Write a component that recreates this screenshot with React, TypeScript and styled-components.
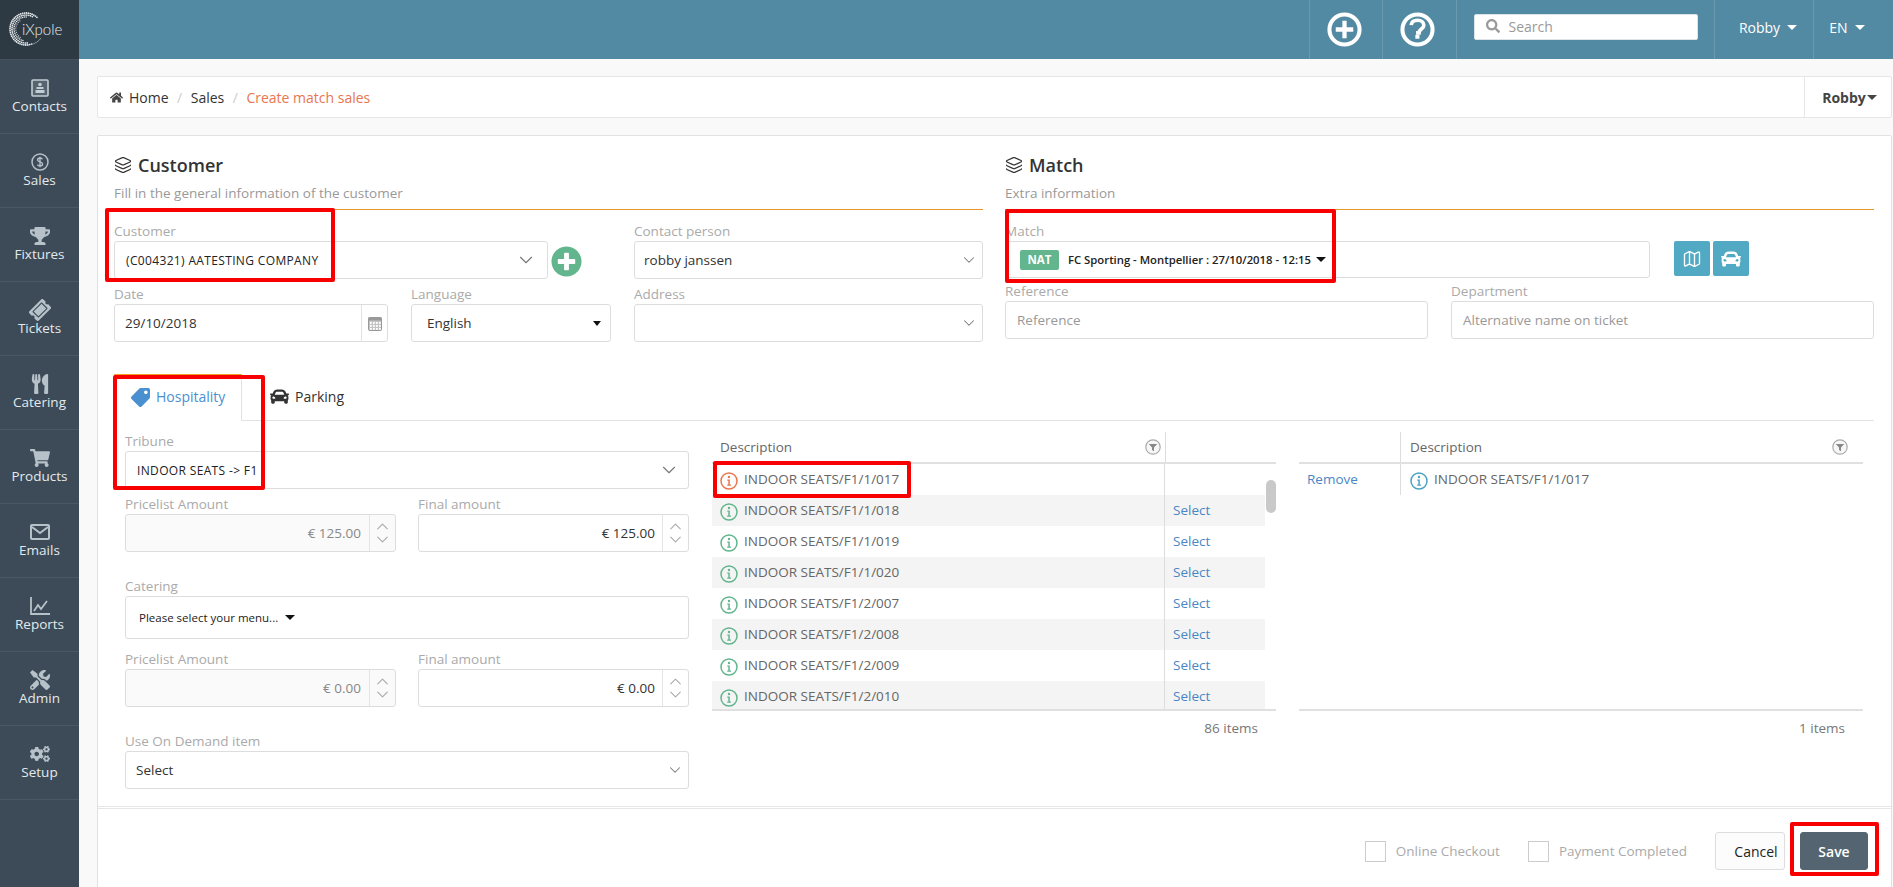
import React from "react";
import styled, { createGlobalStyle } from "styled-components";
import { ChevronDown, ChevronUp, Layers, Map as MapIcon } from "lucide-react";
import {
  FaCar,
  FaCogs,
  FaHome,
  FaPlusCircle,
  FaSearch,
  FaShoppingCart,
  FaTag,
  FaTicketAlt,
  FaTools,
  FaTrophy,
  FaUtensils
} from "react-icons/fa";

const GlobalStyle = createGlobalStyle`
  html, body {
    margin: 0;
    padding: 0;
    height: 100%;
    overflow: hidden;
    font-family: "Open Sans", "Liberation Sans", sans-serif;
    font-size: 13.5px;
    color: #333;
    background: #f9f9f9;
  }
  * { box-sizing: border-box; }
`;

const Page = styled.div`
  position: relative;
  display: grid;
  grid-template-columns: 79px 1fr;
  width: 1893px;
  height: 887px;
  overflow: hidden;
`;

const Sidebar = styled.aside`
  background: #3c4b57;
  display: flex;
  flex-direction: column;
`;
const LogoBox = styled.div`
  height: 60px;
  background: #2d3a44;
  border-bottom: 1px solid #44525e;
`;
const NavItem = styled.div`
  height: 74px;
  padding-top: 19px;
  display: flex;
  flex-direction: column;
  align-items: center;
  color: #e4e9ed;
  border-bottom: 1px solid #4a5864;
  line-height: 18px;
`;
const NavIcon = styled.div`
  height: 18px;
  display: flex;
  align-items: center;
  justify-content: center;
  color: #b7c1c9;
  font-size: 20px;
`;

const Main = styled.div`
  display: flex;
  flex-direction: column;
  min-width: 0;
`;
const Topbar = styled.header`
  height: 59px;
  flex: none;
  background: #538aa3;
  display: flex;
  justify-content: flex-end;
  padding-right: 13px;
  color: #fff;
  font-size: 14px;
`;
const TopCell = styled.div<{ $w: number; $shift?: number }>`
  width: ${p => p.$w}px;
  border-left: 1px solid #6a9ab0;
  display: flex;
  align-items: center;
  justify-content: center;
  gap: 7px;
  padding-bottom: 4px;
  padding-left: ${p => Math.max(p.$shift || 0, 0)}px;
  padding-right: ${p => Math.max(-(p.$shift || 0), 0)}px;
`;
const IconCell = styled(TopCell)`
  padding-bottom: 0;
`;
const SearchCell = styled(TopCell)`
  align-items: flex-start;
  padding-top: 14px;
  padding-bottom: 0;
`;
const SearchBox = styled.div`
  width: 224px;
  height: 26px;
  background: #fff;
  border-radius: 2px;
  border: 1px solid #dde3e6;
  display: flex;
  align-items: center;
  gap: 9px;
  padding: 0 0 2px 11px;
  color: #999;
`;
const Caret = styled.span<{ $color?: string; $size?: number }>`
  display: inline-block;
  width: 0;
  height: 0;
  border-left: ${p => p.$size ?? 5}px solid transparent;
  border-right: ${p => p.$size ?? 5}px solid transparent;
  border-top: 5px solid ${p => p.$color || "#fff"};
`;

const Content = styled.div`
  flex: 1;
  padding: 17px 1px 0 18px;
  min-height: 0;
`;
const Crumbs = styled.nav`
  height: 42px;
  background: #fff;
  border: 1px solid #e6e6e6;
  border-radius: 2px;
  display: flex;
  align-items: center;
  padding-left: 12px;
  margin-bottom: 17px;
  color: #333;
  font-size: 14px;
`;
const Crumb = styled.span<{ $active?: boolean }>`
  color: ${p => (p.$active ? "#e8764f" : "#333")};
`;
const CrumbSep = styled.span`
  color: #ccc;
  margin: 0 8.5px;
`;
const CrumbUser = styled.div`
  margin-left: auto;
  width: 87px;
  height: 100%;
  border-left: 1px solid #e6e6e6;
  display: flex;
  align-items: center;
  justify-content: center;
  gap: 1px;
  padding-left: 3px;
  font-weight: 700;
  color: #444;
`;

const Card = styled.section`
  background: #fff;
  border: 1px solid #e2e2e2;
  border-radius: 2px;
  height: 760px;
  display: flex;
  flex-direction: column;
`;
const Form = styled.div`
  padding: 17px 17px 0 16px;
`;
const Columns = styled.div`
  display: grid;
  grid-template-columns: 869px 869px;
  gap: 22px;
`;
const SectionTitle = styled.h2`
  margin: 0;
  height: 24px;
  font-size: 18px;
  font-weight: 600;
  line-height: 24px;
  color: #333;
  display: flex;
  align-items: center;
  gap: 6px;
`;
const SectionHint = styled.div`
  margin-top: 6px;
  line-height: 20px;
  color: #999;
  padding-bottom: 6px;
  border-bottom: 1px solid #e6992a;
  margin-bottom: 11px;
`;
const LeftRows = styled.div`
  display: grid;
  grid-template-columns: 497px 349px;
  column-gap: 23px;
  row-gap: 5px;
`;
const Pair = styled.div`
  display: flex;
  gap: 23px;
`;
const CustomerPick = styled.div`
  display: flex;
  align-items: flex-end;
  gap: 3px;
`;
const AddCircle = styled.div`
  color: #62b58c;
  font-size: 31px;
  height: 36px;
  display: flex;
  align-items: center;
`;
const Group = styled.div<{ $w?: number; $after?: number }>`
  ${p => (p.$w ? `width: ${p.$w}px; flex: none;` : "flex: 1; min-width: 0;")}
  margin-bottom: ${p => p.$after || 0}px;
`;
const Label = styled.div`
  height: 20px;
  line-height: 20px;
  color: #aaa;
`;
const Field = styled.div<{ $h?: number; $pad?: number; $disabled?: boolean }>`
  height: ${p => p.$h || 38}px;
  border: 1px solid #ddd;
  border-radius: 3px;
  background: ${p => (p.$disabled ? "#fafafa" : "#fff")};
  display: flex;
  align-items: center;
  padding-left: ${p => p.$pad ?? 12}px;
  color: #333;
`;
const PickText = styled.span`
  font-size: 12px;
  letter-spacing: 0.35px;
  color: #222;
`;
const MenuText = styled.span`
  font-size: 11.5px;
  font-weight: 500;
  color: #222;
`;
const Chevron = styled(ChevronDown)<{ $right?: number }>`
  margin-left: auto;
  margin-right: ${p => p.$right ?? 10}px;
  color: #777;
  flex: none;
`;
const LangCaret = styled(Caret)`
  margin-left: auto;
  margin-right: 9px;
`;
const MenuCaret = styled(Caret)`
  margin-left: 7px;
`;
const DateAddon = styled.div`
  margin-left: auto;
  width: 26px;
  height: 100%;
  border-left: 1px solid #e2e2e2;
  display: flex;
  align-items: center;
  justify-content: center;
  color: #999;
  padding-left: 1px;
`;
const Placeholder = styled.span`
  color: #999;
`;
const MatchRow = styled.div`
  display: flex;
  align-items: flex-end;
`;
const MatchTools = styled.div`
  display: flex;
  gap: 3px;
  margin-left: 24px;
  margin-bottom: 2px;
`;
const ToolButton = styled.div`
  width: 36px;
  height: 35px;
  background: #52a9c3;
  border-radius: 2px;
  color: #fff;
  display: flex;
  align-items: center;
  justify-content: center;
`;
const Badge = styled.span`
  width: 39px;
  height: 20px;
  background: #62b58c;
  border-radius: 2px;
  color: #fff;
  font-size: 11.5px;
  font-weight: 700;
  display: flex;
  align-items: center;
  justify-content: center;
  margin-right: 9px;
`;
const MatchText = styled.span`
  font-size: 11.3px;
  font-weight: 600;
  color: #222;
  margin-right: 5px;
`;
const RefRow = styled.div`
  display: flex;
  gap: 23px;
  margin-top: 3px;
`;

const Tabs = styled.div`
  margin-top: 33px;
  height: 46px;
  display: flex;
  border-bottom: 1px solid #e2e2e2;
  font-size: 14px;
`;
const Tab = styled.div<{ $active?: boolean }>`
  display: flex;
  align-items: flex-start;
  gap: 6px;
  line-height: 19px;
  ${p =>
    p.$active
      ? `width: 128px; height: 47px; margin-top: -1px; background: #fff; color: #4a90d0; font-weight: 500; border-top: 2px solid #f0a020; border-left: 1px solid #e2e2e2; border-right: 1px solid #e2e2e2; padding: 11px 0 0 16px;`
      : `height: 46px; color: #333; font-weight: 400; padding: 12px 0 0 28px;`}
`;
const TagIcon = styled(FaTag)`
  transform: scaleX(-1);
  margin-top: 1px;
`;
const TabBody = styled.div`
  display: grid;
  grid-template-columns: 564px 564px 564px;
  gap: 23px;
  padding: 10px 0 0 11px;
`;
const TwoUp = styled.div`
  display: flex;
  gap: 22px;
`;
const NumberText = styled.span<{ $muted?: boolean }>`
  margin-left: auto;
  margin-right: ${p => (p.$muted ? 8 : 7)}px;
  color: ${p => (p.$muted ? "#888" : "#333")};
`;
const Spinner = styled.div`
  width: 26px;
  height: 100%;
  border-left: 1px solid #e4e4e4;
  display: flex;
  flex-direction: column;
  align-items: center;
  justify-content: center;
  color: #aaa;
  flex: none;
`;
const SpinUp = styled(ChevronUp)`
  margin-bottom: -3px;
`;
const SpinDown = styled(ChevronDown)`
  margin-top: -3px;
`;

const TableWrap = styled.div`
  position: relative;
  padding-top: 1px;
`;
const HeadRow = styled.div`
  display: flex;
  height: 32px;
  border-bottom: 2px solid #e0e0e0;
  color: #666;
`;
const Cell = styled.div<{ $w?: number; $line?: boolean; $pad?: number }>`
  ${p => (p.$w ? `width: ${p.$w}px; flex: none;` : "flex: 1; min-width: 0;")}
  ${p => (p.$line ? "border-left: 1px solid #ddd;" : "")}
  padding-left: ${p => p.$pad ?? 8}px;
  display: flex;
  align-items: center;
  gap: 6px;
  height: 100%;
`;
const RowCell = styled(Cell)`
  padding-bottom: 2px;
`;
const FilterSpot = styled.span<{ $right?: number }>`
  margin-left: auto;
  margin-right: ${p => p.$right ?? 4}px;
  display: flex;
`;
const TableBody = styled.div`
  height: 247px;
  overflow: hidden;
  border-bottom: 2px solid #e0e0e0;
`;
const Row = styled.div<{ $striped?: boolean; $w?: number }>`
  display: flex;
  height: 31px;
  ${p => (p.$w ? `width: ${p.$w}px;` : "")}
  background: ${p => (p.$striped ? "#f4f4f4" : "#fff")};
  color: #666;
`;
const LinkText = styled.span`
  color: #4a86c5;
`;
const Thumb = styled.div`
  position: absolute;
  right: 0;
  top: 49px;
  width: 10px;
  height: 33px;
  background: #c9c9c9;
  border-radius: 5px;
`;
const Count = styled.div`
  height: 34px;
  line-height: 34px;
  text-align: right;
  padding-right: 18px;
  color: #777;
`;
const InfoSvg = styled.svg`
  margin-top: 5px;
  flex: none;
`;

const Divider = styled.div`
  margin-top: auto;
  height: 3px;
  border-top: 1px solid #e6e6e6;
  border-bottom: 1px solid #e6e6e6;
`;
const Footer = styled.footer`
  display: flex;
  align-items: flex-start;
  justify-content: flex-end;
  padding: 23px 23px 0 0;
  height: 85px;
`;
const Check = styled.label`
  display: flex;
  align-items: center;
  height: 38px;
  gap: 10px;
  color: #aaa;
  margin-right: 28px;
`;
const CheckBox = styled.span`
  width: 21px;
  height: 21px;
  border: 1px solid #ccc;
  background: #fff;
`;
const Button = styled.button<{ $primary?: boolean }>`
  height: 38px;
  border-radius: 3px;
  font: inherit;
  font-size: 14px;
  font-weight: ${p => (p.$primary ? 600 : 400)};
  color: ${p => (p.$primary ? "#fff" : "#222")};
  background: ${p => (p.$primary ? "#546571" : "#fcfcfc")};
  border: 1px solid ${p => (p.$primary ? "#546571" : "#ddd")};
  width: ${p => (p.$primary ? 68 : 70)}px;
  margin-left: ${p => (p.$primary ? 15 : 0)}px;
  padding: 0 0 0 ${p => (p.$primary ? 0 : 12)}px;
`;

const Annotation = styled.div<{ $x: number; $y: number; $w: number; $h: number }>`
  position: absolute;
  left: ${p => p.$x}px;
  top: ${p => p.$y}px;
  width: ${p => p.$w}px;
  height: ${p => p.$h}px;
  border: 4px solid #f80000;
  border-radius: 2px;
  pointer-events: none;
`;

function Logo() {
  const dots: React.ReactNode[] = [];
  const rings = [
    { r: 16, from: 70, to: 320, count: 36, size: 0.9 },
    { r: 14, from: 85, to: 305, count: 28, size: 0.85 },
    { r: 12, from: 105, to: 280, count: 20, size: 0.75 },
    { r: 10.2, from: 125, to: 245, count: 10, size: 0.6 }
  ];
  rings.forEach((ring, j) => {
    for (let i = 0; i < ring.count; i++) {
      const rad = ((ring.from + (i * (ring.to - ring.from)) / ring.count) * Math.PI) / 180;
      dots.push(
        <circle
          key={`${j}-${i}`}
          cx={26 + ring.r * Math.cos(rad)}
          cy={29 + ring.r * Math.sin(rad)}
          r={ring.size}
          fill="#e6eaed"
        />
      );
    }
  });
  return (
    <svg width="79" height="59" viewBox="0 0 79 59">
      {dots}
      <path d="M31 44.5 A16 16 0 0 0 41 38" fill="none" stroke="#aeb8bf" strokeWidth="0.7" />
      <text x="22" y="35" fontFamily="Lato, 'Open Sans', sans-serif" fontWeight="300" fontSize="15" fill="#e6eaed">
        iXpole
      </text>
    </svg>
  );
}

function ContactsIcon() {
  return (
    <svg width="18" height="18" viewBox="0 0 18 18">
      <rect x="1" y="1" width="16" height="16" rx="1" fill="#56646f" stroke="#c2ccd3" strokeWidth="1.6" />
      <circle cx="9" cy="5.5" r="1.8" fill="#c2ccd3" />
      <rect x="5.5" y="8" width="7" height="2" fill="#c2ccd3" />
      <rect x="4.5" y="11" width="9" height="3" fill="#c2ccd3" />
    </svg>
  );
}

function SalesIcon() {
  return (
    <svg width="18" height="18" viewBox="0 0 18 18">
      <circle cx="9" cy="9" r="8" fill="none" stroke="#b7c1c9" strokeWidth="1.5" />
      <path
        d="M11.5 6.3C11 5.3 10 5 9 5 7.6 5 6.6 5.8 6.6 6.9 6.6 9.4 11.6 8.4 11.6 11 11.6 12.2 10.5 13 9 13 7.8 13 6.9 12.5 6.4 11.6M9 3.8V14.2"
        fill="none"
        stroke="#b7c1c9"
        strokeWidth="1.4"
      />
    </svg>
  );
}

function ReportsIcon() {
  return (
    <svg width="20" height="18" viewBox="0 0 20 18">
      <path d="M1 0V17H20" fill="none" stroke="#b7c1c9" strokeWidth="1.8" />
      <path d="M4 14L8 8L11 12L17 4" fill="none" stroke="#b7c1c9" strokeWidth="1.8" />
    </svg>
  );
}

function EmailIcon() {
  return (
    <svg width="20" height="16" viewBox="0 0 20 16">
      <rect x="1" y="1" width="18" height="14" rx="1" fill="none" stroke="#b7c1c9" strokeWidth="2" />
      <path d="M2 3L10 9L18 3" fill="none" stroke="#b7c1c9" strokeWidth="2" />
    </svg>
  );
}

function RingPlus() {
  return (
    <svg width="35" height="35" viewBox="0 0 36 36">
      <circle cx="18" cy="18" r="15.5" fill="none" stroke="#fff" strokeWidth="4.2" />
      <path d="M18 9V27M9 18H27" stroke="#fff" strokeWidth="4.4" />
    </svg>
  );
}

function RingHelp() {
  return (
    <svg width="35" height="35" viewBox="0 0 36 36">
      <circle cx="18" cy="18" r="15.5" fill="none" stroke="#fff" strokeWidth="4.2" />
      <path d="M11.5 13.5C12 9.5 15 8.5 18 8.5 22 8.5 24.5 10.5 24.5 13.5 24.5 17.5 19.5 17.5 19.5 21.5H16.5" fill="none" stroke="#fff" strokeWidth="3.8" />
      <rect x="15.8" y="23.5" width="4.2" height="4" fill="#fff" />
    </svg>
  );
}

function InfoIcon({ color }: { color: string }) {
  return (
    <InfoSvg width="18" height="18" viewBox="0 0 18 18">
      <circle cx="9" cy="9" r="8" fill="none" stroke={color} strokeWidth="1.5" />
      <circle cx="9" cy="5" r="1.2" fill={color} />
      <path d="M7.3 7.5H9.8V12.6H11V13.8H7.2V12.6H8.3V8.7H7.3Z" fill={color} />
    </InfoSvg>
  );
}

function FilterIcon() {
  return (
    <svg width="16" height="16" viewBox="0 0 16 16">
      <circle cx="8" cy="8" r="7.2" fill="#f7f7f7" stroke="#aaa" strokeWidth="1.2" />
      <path d="M3.8 5H12.2L9 8.6V12.2L7 11V8.6Z" fill="#888" />
    </svg>
  );
}

function CalendarIcon() {
  return (
    <svg width="14" height="15" viewBox="0 0 14 15">
      <rect x="0.5" y="1.5" width="13" height="13" rx="1" fill="#c4c4c4" stroke="#999" />
      <rect x="0.5" y="1.5" width="13" height="3" fill="#999" />
      {[2, 5, 8, 11].map(x =>
        [6, 9, 12].map(y => <rect key={`${x}-${y}`} x={x} y={y} width="1.8" height="1.8" fill="#fff" />)
      )}
    </svg>
  );
}

function Amount({ value, disabled }: { value: string; disabled?: boolean }) {
  return (
    <Field $disabled={disabled} $pad={0}>
      <NumberText $muted={disabled}>{value}</NumberText>
      <Spinner>
        <SpinUp size={19} strokeWidth={1.4} />
        <SpinDown size={19} strokeWidth={1.4} />
      </Spinner>
    </Field>
  );
}

const TicketIcon = styled(FaTicketAlt)`
  transform: rotate(-45deg);
`;

const nav = [
  { label: "Contacts", icon: <ContactsIcon /> },
  { label: "Sales", icon: <SalesIcon /> },
  { label: "Fixtures", icon: <FaTrophy /> },
  { label: "Tickets", icon: <TicketIcon /> },
  { label: "Catering", icon: <FaUtensils /> },
  { label: "Products", icon: <FaShoppingCart /> },
  { label: "Emails", icon: <EmailIcon /> },
  { label: "Reports", icon: <ReportsIcon /> },
  { label: "Admin", icon: <FaTools /> },
  { label: "Setup", icon: <FaCogs /> }
];

const seats = ["1/018", "1/019", "1/020", "2/007", "2/008", "2/009", "2/010"];

const HomeIcon = styled(FaHome)`
  margin-right: 6px;
`;

export default function App() {
  return (
    <Page>
      <GlobalStyle />
      <Sidebar>
        <LogoBox>
          <Logo />
        </LogoBox>
        {nav.map(item => (
          <NavItem key={item.label}>
            <NavIcon>{item.icon}</NavIcon>
            {item.label}
          </NavItem>
        ))}
      </Sidebar>
      <Main>
        <Topbar>
          <IconCell $w={73} $shift={-4}>
            <RingPlus />
          </IconCell>
          <IconCell $w={74} $shift={-4}>
            <RingHelp />
          </IconCell>
          <SearchCell $w={258}>
            <SearchBox>
              <FaSearch size={14} color="#999" />
              Search
            </SearchBox>
          </SearchCell>
          <TopCell $w={99} $shift={8}>
            Robby <Caret />
          </TopCell>
          <TopCell $w={67}>
            EN <Caret />
          </TopCell>
        </Topbar>
        <Content>
          <Crumbs>
            <HomeIcon size={13} color="#444" />
            <Crumb>Home</Crumb>
            <CrumbSep>/</CrumbSep>
            <Crumb>Sales</Crumb>
            <CrumbSep>/</CrumbSep>
            <Crumb $active>Create match sales</Crumb>
            <CrumbUser>
              Robby <Caret $color="#444" />
            </CrumbUser>
          </Crumbs>
          <Card>
            <Form>
              <Columns>
                <div>
                  <SectionTitle>
                    <Layers size={18} strokeWidth={1.6} />
                    Customer
                  </SectionTitle>
                  <SectionHint>Fill in the general information of the customer</SectionHint>
                  <LeftRows>
                    <CustomerPick>
                      <Group $w={434}>
                        <Label>Customer</Label>
                        <Field $pad={11}>
                          <PickText>(C004321) AATESTING COMPANY</PickText>
                          <Chevron size={22} strokeWidth={1.2} />
                        </Field>
                      </Group>
                      <AddCircle>
                        <FaPlusCircle />
                      </AddCircle>
                    </CustomerPick>
                    <Group>
                      <Label>Contact person</Label>
                      <Field $pad={9}>
                        robby janssen
                        <Chevron size={18} strokeWidth={1.4} $right={4} />
                      </Field>
                    </Group>
                    <Pair>
                      <Group $w={274}>
                        <Label>Date</Label>
                        <Field $pad={10}>
                          29/10/2018
                          <DateAddon>
                            <CalendarIcon />
                          </DateAddon>
                        </Field>
                      </Group>
                      <Group>
                        <Label>Language</Label>
                        <Field $pad={15}>
                          English
                          <LangCaret $color="#111" $size={4} />
                        </Field>
                      </Group>
                    </Pair>
                    <Group>
                      <Label>Address</Label>
                      <Field>
                        <Chevron size={18} strokeWidth={1.4} $right={4} />
                      </Field>
                    </Group>
                  </LeftRows>
                </div>
                <div>
                  <SectionTitle>
                    <Layers size={18} strokeWidth={1.6} />
                    Match
                  </SectionTitle>
                  <SectionHint>Extra information</SectionHint>
                  <MatchRow>
                    <Group $w={645}>
                      <Label>Match</Label>
                      <Field $h={37} $pad={14}>
                        <Badge>NAT</Badge>
                        <MatchText>FC Sporting - Montpellier : 27/10/2018 - 12:15</MatchText>
                        <Caret $color="#111" />
                      </Field>
                    </Group>
                    <MatchTools>
                      <ToolButton>
                        <MapIcon size={20} strokeWidth={1.6} />
                      </ToolButton>
                      <ToolButton>
                        <FaCar size={20} />
                      </ToolButton>
                    </MatchTools>
                  </MatchRow>
                  <RefRow>
                    <Group $w={423}>
                      <Label>Reference</Label>
                      <Field $pad={11}>
                        <Placeholder>Reference</Placeholder>
                      </Field>
                    </Group>
                    <Group>
                      <Label>Department</Label>
                      <Field $pad={11}>
                        <Placeholder>Alternative name on ticket</Placeholder>
                      </Field>
                    </Group>
                  </RefRow>
                </div>
              </Columns>

              <Tabs>
                <Tab $active>
                  <TagIcon size={19} />
                  Hospitality
                </Tab>
                <Tab>
                  <FaCar size={19} />
                  Parking
                </Tab>
              </Tabs>

              <TabBody>
                <div>
                  <Group $after={5}>
                    <Label>Tribune</Label>
                    <Field $pad={11}>
                      <PickText>INDOOR SEATS -&gt; F1</PickText>
                      <Chevron size={22} strokeWidth={1.2} $right={8} />
                    </Field>
                  </Group>
                  <TwoUp>
                    <Group $w={271} $after={24}>
                      <Label>Pricelist Amount</Label>
                      <Amount value="€ 125.00" disabled />
                    </Group>
                    <Group $after={24}>
                      <Label>Final amount</Label>
                      <Amount value="€ 125.00" />
                    </Group>
                  </TwoUp>
                  <Group $after={10}>
                    <Label>Catering</Label>
                    <Field $h={43} $pad={13}>
                      <MenuText>Please select your menu...</MenuText>
                      <MenuCaret $color="#111" />
                    </Field>
                  </Group>
                  <TwoUp>
                    <Group $w={271} $after={24}>
                      <Label>Pricelist Amount</Label>
                      <Amount value="€ 0.00" disabled />
                    </Group>
                    <Group $after={24}>
                      <Label>Final amount</Label>
                      <Amount value="€ 0.00" />
                    </Group>
                  </TwoUp>
                  <Group>
                    <Label>Use On Demand item</Label>
                    <Field $pad={10}>
                      Select
                      <Chevron size={18} strokeWidth={1.4} $right={4} />
                    </Field>
                  </Group>
                </div>

                <TableWrap>
                  <HeadRow>
                    <Cell>
                      Description
                      <FilterSpot>
                        <FilterIcon />
                      </FilterSpot>
                    </Cell>
                    <Cell $w={111} $line />
                  </HeadRow>
                  <TableBody>
                    <Row $w={553}>
                      <RowCell>
                        <InfoIcon color="#e8764f" />
                        INDOOR SEATS/F1/1/017
                      </RowCell>
                      <RowCell $w={101} $line />
                    </Row>
                    {seats.map((s, i) => (
                      <Row key={s} $w={553} $striped={i % 2 === 0}>
                        <RowCell>
                          <InfoIcon color="#62b58c" />
                          INDOOR SEATS/F1/{s}
                        </RowCell>
                        <RowCell $w={101} $line>
                          <LinkText>Select</LinkText>
                        </RowCell>
                      </Row>
                    ))}
                  </TableBody>
                  <Thumb />
                  <Count>86 items</Count>
                </TableWrap>

                <TableWrap>
                  <HeadRow>
                    <Cell $w={101} />
                    <Cell $line $pad={9}>
                      Description
                      <FilterSpot $right={15}>
                        <FilterIcon />
                      </FilterSpot>
                    </Cell>
                  </HeadRow>
                  <TableBody>
                    <Row>
                      <RowCell $w={101}>
                        <LinkText>Remove</LinkText>
                      </RowCell>
                      <RowCell $line $pad={9}>
                        <InfoIcon color="#4ba3c3" />
                        INDOOR SEATS/F1/1/017
                      </RowCell>
                    </Row>
                  </TableBody>
                  <Count>1 items</Count>
                </TableWrap>
              </TabBody>
            </Form>

            <Divider />
            <Footer>
              <Check>
                <CheckBox />
                Online Checkout
              </Check>
              <Check>
                <CheckBox />
                Payment Completed
              </Check>
              <Button>Cancel</Button>
              <Button $primary>Save</Button>
            </Footer>
          </Card>
        </Content>
      </Main>
      <Annotation $x={105} $y={208} $w={230} $h={74} />
      <Annotation $x={1005} $y={209} $w={331} $h={74} />
      <Annotation $x={113} $y={375} $w={152} $h={115} />
      <Annotation $x={713} $y={461} $w={198} $h={37} />
      <Annotation $x={1790} $y={822} $w={89} $h={54} />
    </Page>
  );
}
